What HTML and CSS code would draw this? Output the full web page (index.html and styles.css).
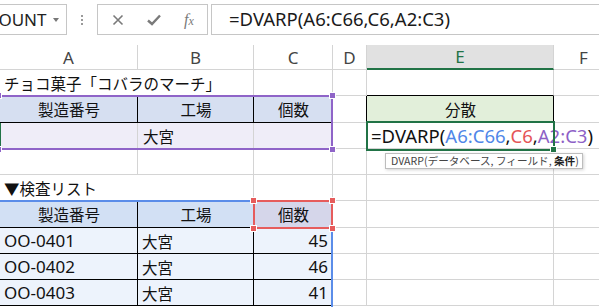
FILE: index.html
```html
<!DOCTYPE html>
<html lang="ja">
<head>
    <meta charset="UTF-8">
    <title>DVARP</title>
    <link rel="stylesheet" href="styles.css">
</head>
<body>
    <div class="bar">
        <div class="namebox"><span class="name">COUNT</span><span class="caret"></span></div>
        <div class="grip"><i></i><i></i><i></i></div>
        <div class="btns">
            <svg class="ico" width="12" height="12" viewBox="0 0 12 12"><path d="M1.5 1.5 L10.5 10.5 M10.5 1.5 L1.5 10.5" stroke="#7a7a7a" stroke-width="1.6" fill="none"/></svg>
            <svg class="ico" width="14" height="12" viewBox="0 0 14 12"><path d="M1 6.5 L5 10 L13 1.5" stroke="#7a7a7a" stroke-width="2.4" fill="none"/></svg>
            <span class="fx">f<span>x</span></span>
        </div>
        <div class="input">=DVARP(A6:C66,C6,A2:C3)</div>
    </div>

    <div class="sheet">
        <!-- column headers -->
        <div class="c hd">A</div>
        <div class="c hd">B</div>
        <div class="c hd">C</div>
        <div class="c hd">D</div>
        <div class="c hd sel">E</div>
        <div class="c hd">F</div>

        <!-- row 1 -->
        <div class="c over">チョコ菓子「コバラのマーチ」</div>
        <div class="c"></div>
        <div class="c"></div>
        <div class="c"></div>
        <div class="c bb"></div>
        <div class="c"></div>

        <!-- row 2 -->
        <div class="c th1 mid br bb">製造番号</div>
        <div class="c th1 mid br bb">工場</div>
        <div class="c th1 mid bb">個数</div>
        <div class="c br"></div>
        <div class="c green mid br bb">分散</div>
        <div class="c"></div>

        <!-- row 3 -->
        <div class="c lav"></div>
        <div class="c lav">大宮</div>
        <div class="c lav"></div>
        <div class="c"></div>
        <div class="c over formula">=DVARP(<span class="f-blue">A6:C66</span>,<span class="f-red">C6</span>,<span class="f-purple">A2:C3</span>)</div>
        <div class="c"></div>

        <!-- row 4 -->
        <div class="c"></div>
        <div class="c"></div>
        <div class="c"></div>
        <div class="c"></div>
        <div class="c"></div>
        <div class="c"></div>

        <!-- row 5 -->
        <div class="c over">▼検査リスト</div>
        <div class="c"></div>
        <div class="c"></div>
        <div class="c"></div>
        <div class="c"></div>
        <div class="c"></div>

        <!-- row 6 -->
        <div class="c th2 mid br bb">製造番号</div>
        <div class="c th2 mid br bb">工場</div>
        <div class="c th2 pick mid bb">個数</div>
        <div class="c"></div>
        <div class="c"></div>
        <div class="c"></div>

        <!-- rows 7-9 -->
        <div class="c row lat br bb">OO-0401</div>
        <div class="c row br bb">大宮</div>
        <div class="c row lat num bb">45</div>
        <div class="c"></div>
        <div class="c"></div>
        <div class="c"></div>

        <div class="c row lat br bb">OO-0402</div>
        <div class="c row br bb">大宮</div>
        <div class="c row lat num bb">46</div>
        <div class="c"></div>
        <div class="c"></div>
        <div class="c"></div>

        <div class="c row lat br bb">OO-0403</div>
        <div class="c row br bb">大宮</div>
        <div class="c row lat num bb">41</div>
        <div class="c"></div>
        <div class="c"></div>
        <div class="c"></div>

        <!-- selection overlays -->
        <div class="rowmark"></div>
        <div class="range purple">
            <i class="h tl"></i><i class="h tr"></i><i class="h bl"></i><i class="h brh"></i>
        </div>
        <div class="range blue"></div>
        <div class="range red">
            <i class="h tl"></i><i class="h tr"></i><i class="h bl"></i><i class="h brh"></i>
        </div>
        <div class="active"><i class="fill"></i></div>
        <div class="tip">DVARP(データベース, フィールド, <b>条件</b>)</div>
    </div>
</body>
</html>
```

FILE: styles.css
```css
html, body {
    margin: 0;
    padding: 0;
    background: #fff;
    overflow: hidden;
}
body {
    width: 599px;
    height: 307px;
    font-family: "Noto Sans CJK JP", "Noto Sans", sans-serif;
    color: #111;
}

/* formula bar */
.bar {
    display: flex;
    align-items: flex-start;
    height: 45px;
    padding-top: 4px;
    box-sizing: border-box;
}
.namebox {
    width: 68px;
    height: 31px;
    margin-left: -1px;
    border: 1px solid #c6c6c6;
    box-sizing: border-box;
    display: flex;
    align-items: center;
    overflow: hidden;
    flex: none;
}
.name {
    font-family: "Noto Sans", sans-serif;
    font-size: 17px;
    color: #222;
    margin-left: -12px;
}
.caret {
    margin-left: auto;
    margin-right: 7px;
    width: 0;
    height: 0;
    border-left: 3.5px solid transparent;
    border-right: 3.5px solid transparent;
    border-top: 4px solid #777;
}
.grip {
    width: 30px;
    height: 31px;
    display: flex;
    flex-direction: column;
    align-items: center;
    justify-content: center;
    gap: 2px;
    flex: none;
}
.grip i {
    width: 2px;
    height: 2px;
    background: #9a9a9a;
}
.btns {
    width: 111px;
    height: 31px;
    border: 1px solid #c6c6c6;
    box-sizing: border-box;
    display: flex;
    align-items: center;
    flex: none;
    padding-left: 14px;
    gap: 23px;
}
.fx {
    font-family: "Liberation Serif", serif;
    font-style: italic;
    font-size: 16px;
    color: #7a7a7a;
}
.fx span {
    font-size: 12px;
}
.input {
    flex: 1;
    height: 31px;
    margin-left: 3px;
    margin-right: -2px;
    border: 1px solid #c6c6c6;
    box-sizing: border-box;
    padding-left: 17px;
    font-family: "Noto Sans", sans-serif;
    font-size: 18.5px;
    line-height: 28px;
    color: #1a1a1a;
}

/* sheet grid */
.sheet {
    position: relative;
    display: grid;
    grid-template-columns: 138px 116px 79px 34px 187px 60px;
    grid-template-rows: 25px 26px 27px 26px 26px 26px 27px 26px 26px 26px;
}
.c {
    box-sizing: border-box;
    border-right: 1px solid #d4d4d4;
    border-bottom: 1px solid #d4d4d4;
    display: flex;
    align-items: center;
    padding: 0 4px 0 5px;
    font-size: 15.5px;
    white-space: nowrap;
}
.hd {
    justify-content: center;
    font-family: "Noto Sans", sans-serif;
    font-size: 17px;
    color: #444;
    padding: 0;
}
.hd.sel {
    background: #e1e1e1;
    color: #217346;
    border-bottom: 2px solid #217346;
}
.over {
    border-right: none;
    overflow: visible;
    padding-left: 4px;
}
.mid {
    justify-content: center;
}
.br {
    border-right-color: #000;
}
.bb {
    border-bottom-color: #000;
}
.th1 {
    background: #d6dff1;
}
.lav {
    background: #efedf8;
}
.th2 {
    background: #d2e0f4;
}
.pick {
    background: #d5d6ea;
}
.row {
    background: #edf3fc;
    padding-left: 4px;
}
.lat {
    font-family: "Noto Sans", sans-serif;
    font-size: 17px;
}
.num {
    justify-content: flex-end;
    padding-right: 4px;
}
.green {
    background: #e2efda;
}
.formula {
    font-size: 18.5px;
    font-family: "Noto Sans", sans-serif;
    color: #111;
}
.f-blue { color: #4f86e8; }
.f-red { color: #e55457; }
.f-purple { color: #8d5fc6; }

/* overlays */
.rowmark {
    position: absolute;
    left: 0;
    top: 78px;
    width: 1px;
    height: 26px;
    background: #217346;
}
.range {
    position: absolute;
    box-sizing: border-box;
    border: 2px solid;
}
.purple {
    left: -2px;
    top: 50px;
    width: 335px;
    height: 55px;
    border-color: #8f64c8;
}
.blue {
    left: -2px;
    top: 155px;
    width: 335px;
    height: 200px;
    border-color: #5b8de9;
}
.red {
    left: 253px;
    top: 155px;
    width: 80px;
    height: 29px;
    border-color: #e65c5c;
}
.h {
    position: absolute;
    width: 7px;
    height: 7px;
    box-sizing: border-box;
    border: 1px solid #fff;
}
.purple .h { background: #8f64c8; }
.red .h { background: #e65c5c; }
.tl { left: -5px; top: -5px; }
.tr { right: -5px; top: -5px; }
.bl { left: -5px; bottom: -5px; }
.brh { right: -5px; bottom: -5px; }
.active {
    position: absolute;
    left: 366px;
    top: 76px;
    width: 189px;
    height: 30px;
    box-sizing: border-box;
    border: 2px solid #217346;
}
.fill {
    position: absolute;
    right: -4px;
    bottom: -4px;
    width: 7px;
    height: 7px;
    box-sizing: border-box;
    border: 1px solid #fff;
    background: #217346;
}
.tip {
    position: absolute;
    left: 385px;
    top: 108px;
    width: 198px;
    height: 16px;
    box-sizing: border-box;
    border: 1px solid #bdbdbd;
    background: #fff;
    box-shadow: 1px 1px 3px rgba(0, 0, 0, 0.18);
    font-size: 10.6px;
    line-height: 14px;
    padding-left: 5px;
    color: #444;
    white-space: nowrap;
    overflow: hidden;
}
.tip b {
    color: #222;
}
```
